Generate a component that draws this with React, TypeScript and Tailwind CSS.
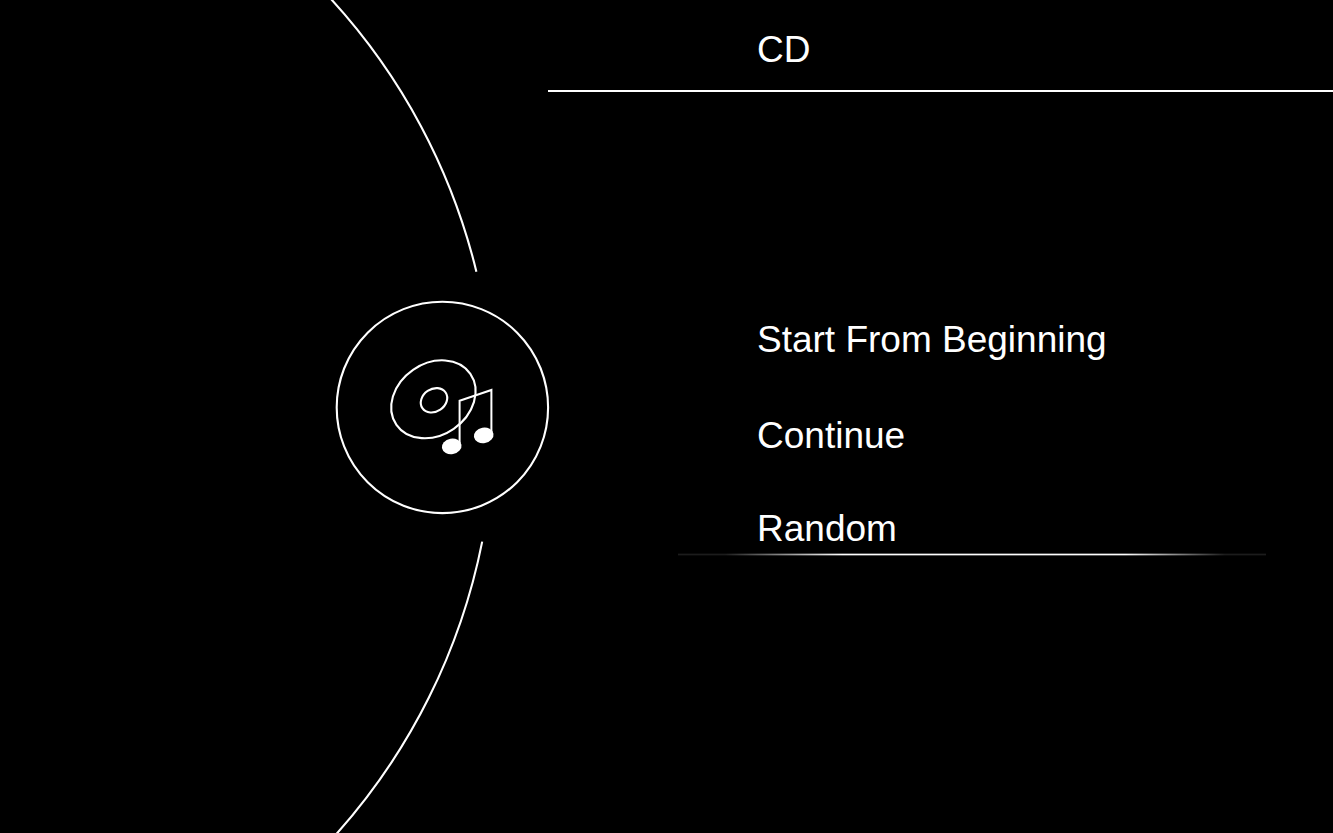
const options = [
  { label: 'Start From Beginning', row: 'mb-12', selected: false },
  { label: 'Continue', row: 'mb-[45px]', selected: false },
  { label: 'Random', row: '', selected: true },
];

function Dial() {
  return (
    <svg
      viewBox="0 0 548 833"
      preserveAspectRatio="xMaxYMid meet"
      className="block h-full w-full overflow-visible"
      fill="none"
      stroke="#fff"
      strokeWidth="2.1"
      role="img"
      aria-label="CD audio source"
    >
      <path d="M331 -1 A620.5 620.5 0 0 1 476.4 271.7" />
      <path d="M482.2 541.6 A620.5 620.5 0 0 1 336.4 834" />
      <circle cx="442.4" cy="407.4" r="105.7" />
      <ellipse cx="433.4" cy="399.3" rx="44.9" ry="35.8" transform="rotate(-34.6 433.4 399.3)" />
      <ellipse cx="434" cy="400.3" rx="14" ry="11.3" transform="rotate(-34 434 400.3)" />
      <path d="M459.6 443 V400.8 L491.4 390 V432" strokeWidth="2" />
      <ellipse cx="451.7" cy="446.4" rx="9.9" ry="7.8" transform="rotate(-10 451.7 446.4)" fill="#fff" stroke="none" />
      <ellipse cx="483.7" cy="435.4" rx="9.9" ry="7.8" transform="rotate(-10 483.7 435.4)" fill="#fff" stroke="none" />
    </svg>
  );
}

export default function App() {
  return (
    <main className="flex h-screen overflow-hidden bg-black font-['Liberation_Sans',Arial,sans-serif] text-[37px] leading-[48px] text-white">
      <aside className="w-[548px] shrink-0">
        <Dial />
      </aside>
      <section className="flex min-w-0 flex-1 flex-col">
        <header className="border-b-2 border-white pt-[26px] pb-4 pl-[209px]">
          <h1>CD</h1>
        </header>
        <nav aria-label="CD playback" className="pt-56 pr-[67px] pl-[130px]">
          <ul>
            {options.map((option) => (
              <li key={option.label} className={option.row}>
                <button
                  type="button"
                  aria-current={option.selected}
                  className="block w-full cursor-pointer pl-[79px] text-left whitespace-nowrap"
                >
                  {option.label}
                </button>
                {option.selected && (
                  <div className="h-[3px] bg-[linear-gradient(90deg,#1c1c1c_0%,#1c1c1c_8%,#fff_28%,#fff_76%,#1c1c1c_93%,#1c1c1c_100%)] mask-[linear-gradient(rgba(0,0,0,0.35)_1px,#000_1px,#000_2px,rgba(0,0,0,0.35)_2px)]" />
                )}
              </li>
            ))}
          </ul>
        </nav>
      </section>
    </main>
  );
}
